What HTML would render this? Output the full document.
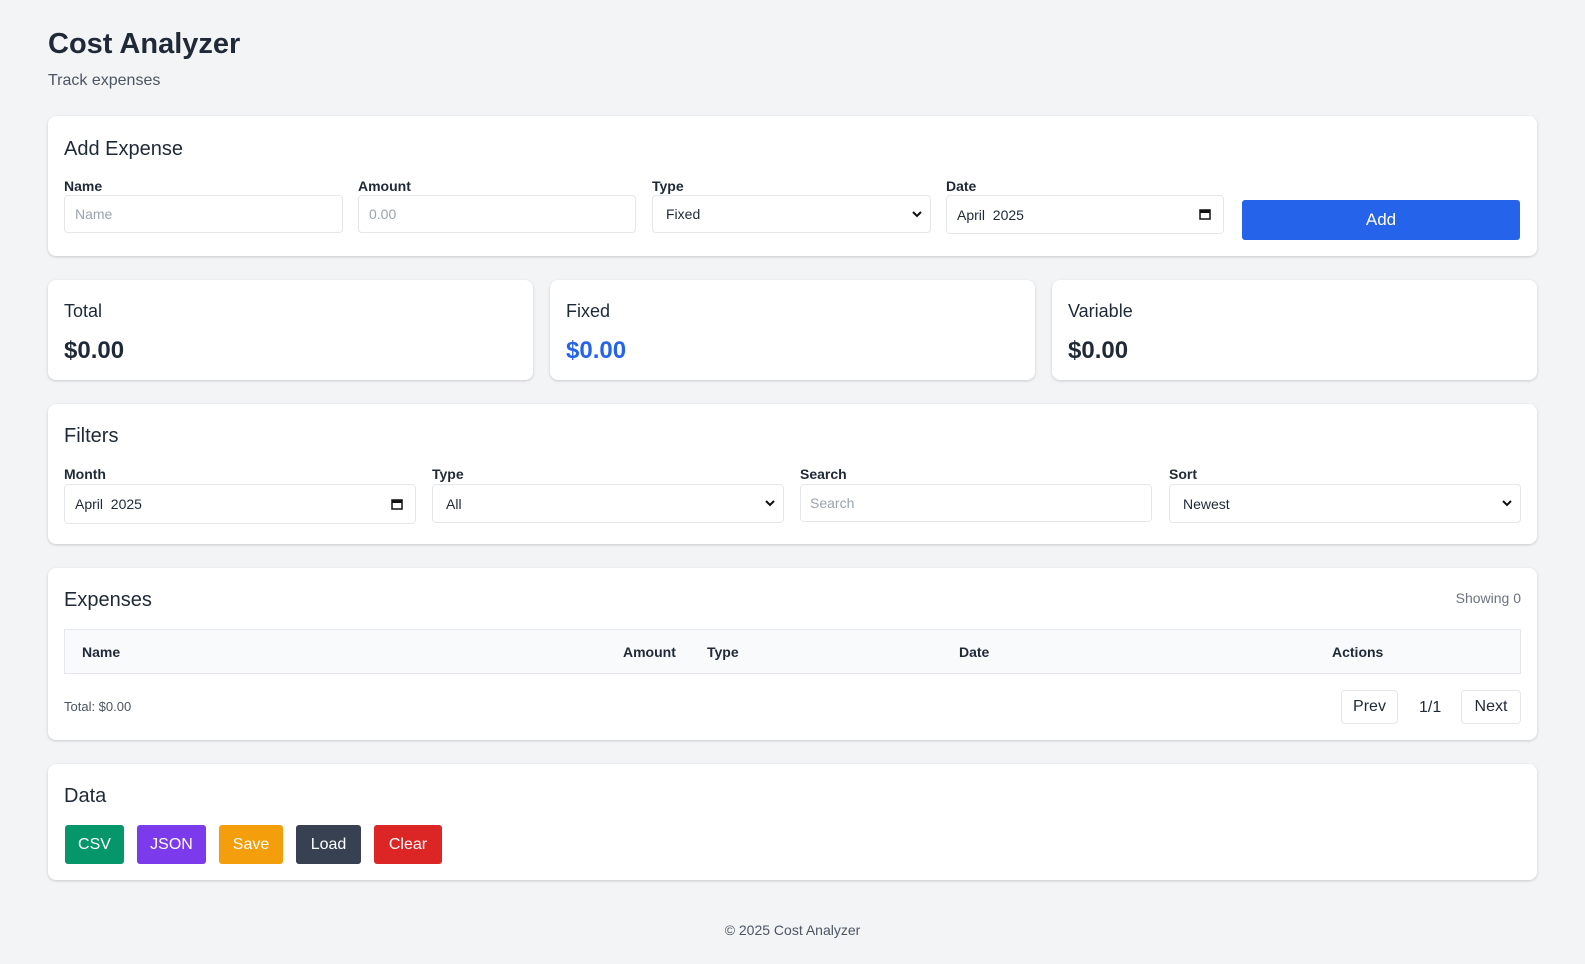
<!DOCTYPE html>
<html><head><meta charset="utf-8"><style>
*{box-sizing:border-box;margin:0;padding:0}
body{width:1585px;height:964px;background:#f3f4f6;font-family:"Liberation Sans",sans-serif;color:#1f2937;position:relative;overflow:hidden}
.a{position:absolute}
.card{position:absolute;left:48px;width:1489px;background:#fff;border-radius:8px;box-shadow:0 1px 3px rgba(0,0,0,.12),0 1px 2px rgba(0,0,0,.06)}
h2{position:absolute;font-size:20px;font-weight:normal;color:#1f2937;left:16px}
.lbl{position:absolute;font-size:14px;font-weight:bold;color:#1f2937}
.inp{position:absolute;height:38px;border:1px solid #e5e7eb;border-radius:4px;background:#fff;font-size:14px;padding:0 10px;display:flex;align-items:center;color:#1f2937}
.ph{color:#9ca3af}
.chev{position:absolute;right:8px;top:14px}
.btn{position:absolute;color:#fff;font-size:16px;display:flex;align-items:center;justify-content:center;border-radius:3px}
.th{position:absolute;font-size:14px;font-weight:bold;top:16px}
</style></head><body>
<div class="a" style="left:48px;top:28px;font-size:29px;font-weight:bold;color:#1f2937">Cost Analyzer</div>
<div class="a" style="left:48px;top:72px;font-size:16px;color:#4b5563">Track expenses</div>

<div class="card" style="top:116px;height:140px">
<h2 style="top:22px">Add Expense</h2>
<div class="lbl" style="left:16px;top:62px">Name</div>
<div class="inp" style="left:16px;top:79px;width:279px"><span class="ph">Name</span></div>
<div class="lbl" style="left:310px;top:62px">Amount</div>
<div class="inp" style="left:310px;top:79px;width:278px"><span class="ph">0.00</span></div>
<div class="lbl" style="left:604px;top:62px">Type</div>
<div class="inp" style="left:604px;top:79px;width:279px;padding-left:13px">Fixed<svg class="chev" width="10" height="8" viewBox="0 0 10 8"><path d="M1 2l4 4 4-4" stroke="#111" stroke-width="2" fill="none"/></svg></div>
<div class="lbl" style="left:898px;top:62px">Date</div>
<div class="inp" style="left:898px;top:79px;width:278px;height:39px">April&nbsp; 2025<svg class="chev" style="right:12px;top:12px" width="12" height="12" viewBox="0 0 12 12"><rect x="1" y="2" width="10" height="9" fill="none" stroke="#111" stroke-width="1.5"/><rect x="1" y="2" width="10" height="3" fill="#111"/></svg></div>
<div class="btn" style="left:1194px;top:84px;width:278px;height:40px;background:#2563eb;font-size:17px">Add</div>
</div>

<div class="card" style="top:280px;height:100px;width:485px">
<div class="a" style="left:16px;top:21px;font-size:18px">Total</div>
<div class="a" style="left:16px;top:57px;font-size:24px;font-weight:bold">$0.00</div></div>
<div class="card" style="top:280px;height:100px;width:485px;left:550px">
<div class="a" style="left:16px;top:21px;font-size:18px">Fixed</div>
<div class="a" style="left:16px;top:57px;font-size:24px;font-weight:bold;color:#2563eb">$0.00</div></div>
<div class="card" style="top:280px;height:100px;width:485px;left:1052px">
<div class="a" style="left:16px;top:21px;font-size:18px">Variable</div>
<div class="a" style="left:16px;top:57px;font-size:24px;font-weight:bold">$0.00</div></div>

<div class="card" style="top:404px;height:140px">
<h2 style="top:21px">Filters</h2>
<div class="lbl" style="left:16px;top:62px">Month</div>
<div class="inp" style="left:16px;top:80px;width:352px;height:40px">April&nbsp; 2025<svg class="chev" style="right:12px;top:13px" width="12" height="12" viewBox="0 0 12 12"><rect x="1" y="2" width="10" height="9" fill="none" stroke="#111" stroke-width="1.5"/><rect x="1" y="2" width="10" height="3" fill="#111"/></svg></div>
<div class="lbl" style="left:384px;top:62px">Type</div>
<div class="inp" style="left:384px;top:80px;width:352px;height:39px;padding-left:13px">All<svg class="chev" width="10" height="8" viewBox="0 0 10 8"><path d="M1 2l4 4 4-4" stroke="#111" stroke-width="2" fill="none"/></svg></div>
<div class="lbl" style="left:752px;top:62px">Search</div>
<div class="inp" style="left:752px;top:80px;width:352px;height:38px;padding-left:9px"><span class="ph">Search</span></div>
<div class="lbl" style="left:1121px;top:62px">Sort</div>
<div class="inp" style="left:1121px;top:80px;width:352px;height:39px;padding-left:13px">Newest<svg class="chev" width="10" height="8" viewBox="0 0 10 8"><path d="M1 2l4 4 4-4" stroke="#111" stroke-width="2" fill="none"/></svg></div>
</div>

<div class="card" style="top:568px;height:172px">
<h2 style="top:21px">Expenses</h2>
<div class="a" style="right:16px;top:22px;font-size:14px;color:#6b7280">Showing 0</div>
<div class="a" style="left:16px;top:61px;width:1457px;height:45px;background:#f9fafb;border:1px solid #e5e7eb">
<div class="th" style="left:17px;top:14px">Name</div>
<div class="th" style="left:558px;top:14px">Amount</div>
<div class="th" style="left:642px;top:14px">Type</div>
<div class="th" style="left:894px;top:14px">Date</div>
<div class="th" style="left:1267px;top:14px">Actions</div>
</div>
<div class="a" style="left:16px;top:131px;font-size:13px;color:#4b5563">Total: $0.00</div>
<div class="inp" style="left:1293px;top:122px;width:57px;height:34px;justify-content:center;font-size:16px">Prev</div>
<div class="a" style="left:1371px;top:131px;font-size:16px">1/1</div>
<div class="inp" style="left:1413px;top:122px;width:60px;height:34px;justify-content:center;font-size:16px">Next</div>
</div>

<div class="card" style="top:764px;height:116px">
<h2 style="top:21px">Data</h2>
<div class="btn" style="left:17px;top:61px;width:59px;height:39px;background:#059669">CSV</div>
<div class="btn" style="left:89px;top:61px;width:69px;height:39px;background:#7c3aed">JSON</div>
<div class="btn" style="left:171px;top:61px;width:64px;height:39px;background:#f59e0b">Save</div>
<div class="btn" style="left:248px;top:61px;width:65px;height:39px;background:#374151">Load</div>
<div class="btn" style="left:326px;top:61px;width:68px;height:39px;background:#dc2626">Clear</div>
</div>

<div class="a" style="left:0;width:1585px;top:922px;text-align:center;font-size:14px;color:#4b5563">© 2025 Cost Analyzer</div>
</body></html>
